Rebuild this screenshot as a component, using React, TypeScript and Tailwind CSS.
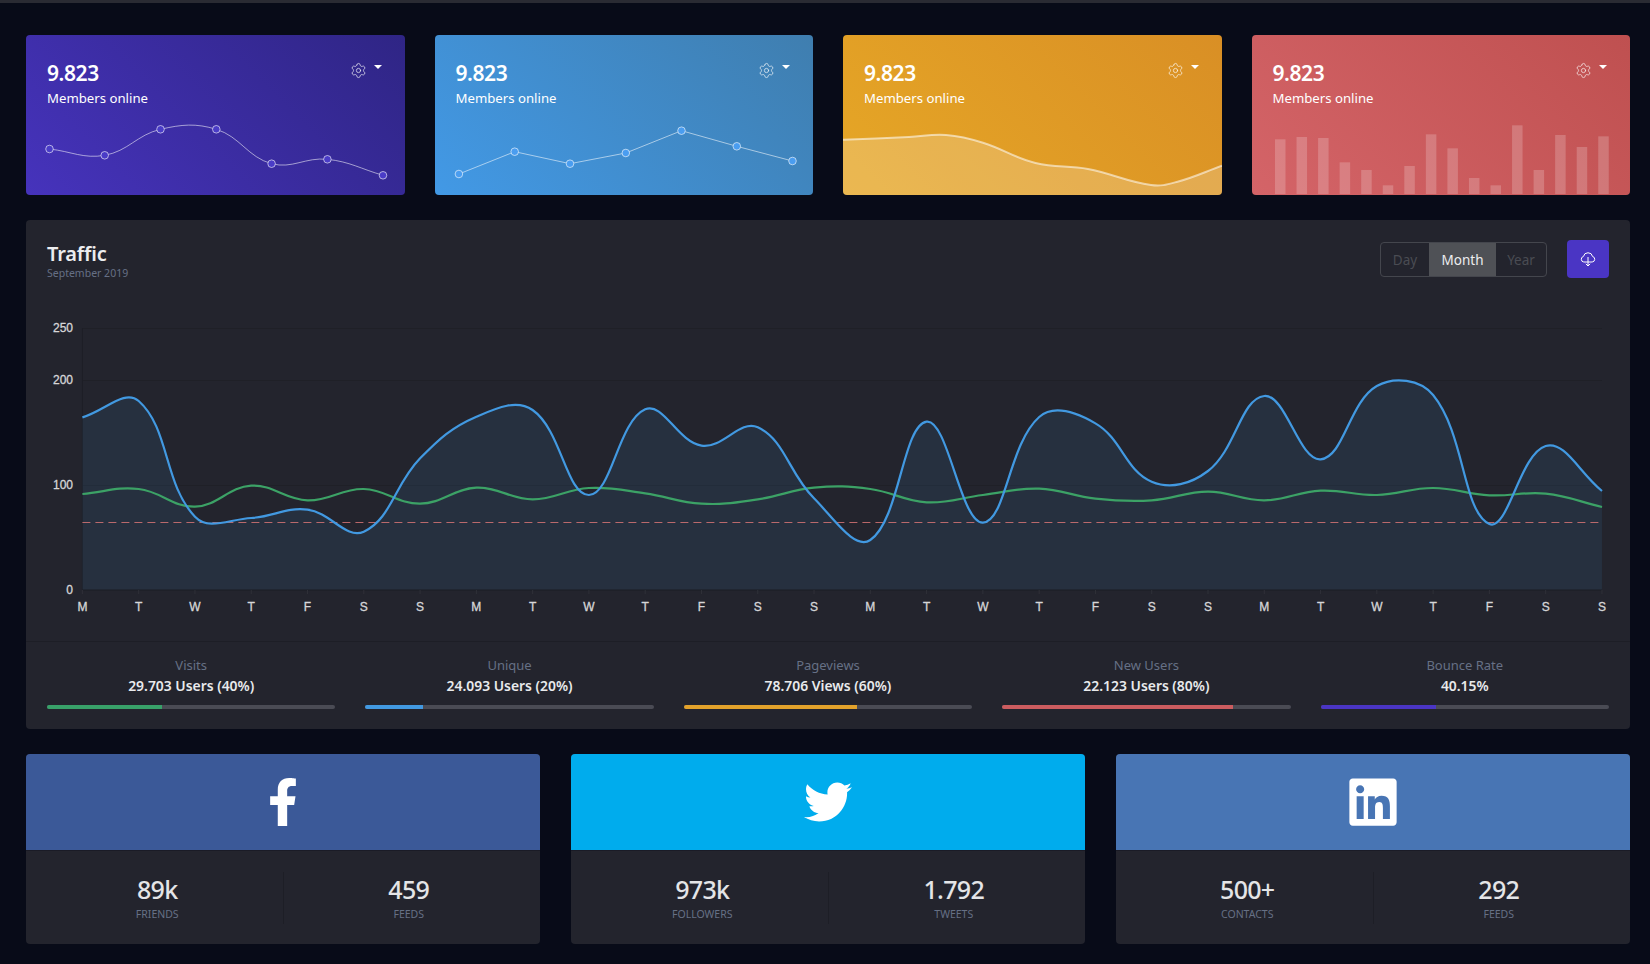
import { Settings } from 'lucide-react';
import { FaFacebookF, FaTwitter, FaLinkedin } from 'react-icons/fa';

type Pt = [number, number];

// same bezier smoothing as the chart lib: control points scaled by neighbour distance
function smoothPath(pts: Pt[], t = 0.4) {
  let d = `M${pts[0][0]} ${pts[0][1]}`;
  const cps = pts.map((cur, i) => {
    const prev = pts[i - 1] ?? cur;
    const next = pts[i + 1] ?? cur;
    const d01 = Math.hypot(cur[0] - prev[0], cur[1] - prev[1]);
    const d12 = Math.hypot(next[0] - cur[0], next[1] - cur[1]);
    const sum = d01 + d12 || 1;
    const fa = (t * d01) / sum;
    const fb = (t * d12) / sum;
    return {
      inp: [cur[0] - fa * (next[0] - prev[0]), cur[1] - fa * (next[1] - prev[1])],
      out: [cur[0] + fb * (next[0] - prev[0]), cur[1] + fb * (next[1] - prev[1])],
    };
  });
  for (let i = 1; i < pts.length; i++) {
    const a = cps[i - 1].out;
    const b = cps[i].inp;
    d += ` C${a[0].toFixed(1)} ${a[1].toFixed(1)} ${b[0].toFixed(1)} ${b[1].toFixed(1)} ${pts[i][0]} ${pts[i][1]}`;
  }
  return d;
}

const PLOT_LEFT = 82.4;
const PLOT_STEP = 56.28;
const PLOT_RIGHT = PLOT_LEFT + PLOT_STEP * 27;
const zoomY = (v: number) => 215 + v / 3;

const blueRaw = [607, 558, 905, 909, 884, 950, 730, 605, 585, 840, 583, 692, 637, 850, 975, 620, 923, 606, 625, 800, 768, 543, 733, 513, 540, 927, 693, 828];
const greenRaw = [837, 822, 875, 812, 856, 822, 866, 818, 853, 819, 835, 866, 853, 818, 822, 862, 840, 821, 851, 856, 830, 856, 827, 840, 819, 841, 836, 876];
const bluePts: Pt[] = blueRaw.map((v, i) => [+(PLOT_LEFT + i * PLOT_STEP).toFixed(1), zoomY(v)]);
const greenPts: Pt[] = greenRaw.map((v, i) => [+(PLOT_LEFT + i * PLOT_STEP).toFixed(1), zoomY(v)]);
const days = 'MTWTFSS'.repeat(4).split('');

const purplePts: Pt[] = [[49.5, 149], [104.7, 155.3], [160.5, 129.3], [216.3, 129.3], [271.6, 163.7], [327.4, 159.3], [383, 175.3]];
const skyPts: Pt[] = [[458.4, 174], [514.2, 151.7], [569.5, 163.7], [625.3, 153], [681, 130.7], [736.3, 146.3], [792, 161]];
const amberPts: Pt[] = [[843, 139.7], [909, 137], [946, 135], [983, 142.7], [1035.5, 163], [1088, 169], [1151, 185], [1177.6, 181.7], [1222, 165.7]];
const barTops = [418, 411, 414, 487, 510, 556, 498, 403, 445, 534, 556, 376, 510, 405, 441, 409];

function CardHead() {
  return (
    <div className="flex justify-between pl-[21px] pr-[23px] pt-[24px] h-[80px] text-white">
      <div>
        <div className="text-[21px] leading-[28px] font-semibold tracking-[-0.4px]">9.823</div>
        <div className="text-[13.2px] leading-[20px] mt-[1px]">Members online</div>
      </div>
      <div className="flex items-start gap-[7px] pt-[3px]">
        <Settings size={17} strokeWidth={1.1} className="opacity-85" />
        <span className="mt-[3px] w-0 h-0 border-x-[4px] border-x-transparent border-t-[4px] border-t-white" />
      </div>
    </div>
  );
}

function Spark({ x, children }: { x: number; children: React.ReactNode }) {
  return (
    <svg viewBox={`${x} 115 378.5 80`} className="block w-full h-[80px]">
      {children}
    </svg>
  );
}

function SparkDots({ pts, fill }: { pts: Pt[]; fill: string }) {
  return (
    <>
      {pts.map(([cx, cy], i) => (
        <circle key={i} cx={cx} cy={cy} r={3.8} fill={fill} stroke="rgba(255,255,255,0.6)" strokeWidth={1} />
      ))}
    </>
  );
}

const stats = [
  { label: 'Visits', value: '29.703 Users (40%)', pct: 40, bar: 'bg-[#38a169]' },
  { label: 'Unique', value: '24.093 Users (20%)', pct: 20, bar: 'bg-[#4299e1]' },
  { label: 'Pageviews', value: '78.706 Views (60%)', pct: 60, bar: 'bg-[#e2a22b]' },
  { label: 'New Users', value: '22.123 Users (80%)', pct: 80, bar: 'bg-[#cb5c5f]' },
  { label: 'Bounce Rate', value: '40.15%', pct: 40, bar: 'bg-[#4a35c4]' },
];

const socials = [
  { bg: 'bg-[#3b5998]', icon: <FaFacebookF size={48} />, a: ['89k', 'Friends'], b: ['459', 'Feeds'] },
  { bg: 'bg-[#00aced]', icon: <FaTwitter size={48} />, a: ['973k', 'Followers'], b: ['1.792', 'Tweets'] },
  { bg: 'bg-[#4875b4]', icon: <FaLinkedin size={54} />, a: ['500+', 'Contacts'], b: ['292', 'Feeds'] },
];

function SocialStat({ value, label }: { value: string; label: string }) {
  return (
    <div className="flex-1 text-center pt-[2px]">
      <div className="text-[25px] leading-[30px] font-medium tracking-[-0.7px] text-[#e4e5e7]">{value}</div>
      <div className="text-[10.5px] leading-[16px] mt-[2px] uppercase text-[#667085]">{label}</div>
    </div>
  );
}

export default function App() {
  const bluePath = smoothPath(bluePts);
  const axisText = { fontSize: 12, fill: '#d6d6d8', stroke: '#d6d6d8', strokeWidth: 0.3, fontFamily: 'Liberation Sans, sans-serif' };
  return (
    <div className="min-h-[964px] bg-[#080b18] font-['Noto_Sans',sans-serif] overflow-hidden">
      <div className="h-[3px] bg-[#2a2b33]" />
      <div className="pl-[26px] pr-[20px] pt-[32px]">
        {/* top cards */}
        <div className="grid grid-cols-4 gap-[30px]">
          <div className="h-[160px] rounded-[4px] overflow-hidden bg-linear-45 from-[#4633bc] to-[#2f2585]">
            <CardHead />
            <Spark x={26}>
              <path d={smoothPath(purplePts)} fill="none" stroke="rgba(255,255,255,0.55)" strokeWidth={1} />
              <SparkDots pts={purplePts} fill="#4a3cc7" />
            </Spark>
          </div>
          <div className="h-[160px] rounded-[4px] overflow-hidden bg-linear-45 from-[#4299e6] to-[#3f7eaf]">
            <CardHead />
            <Spark x={434.5}>
              <path d={`M${skyPts.map((p) => p.join(' ')).join(' L')}`} fill="none" stroke="rgba(255,255,255,0.55)" strokeWidth={1} />
              <SparkDots pts={skyPts} fill="#4a9df0" />
            </Spark>
          </div>
          <div className="h-[160px] rounded-[4px] overflow-hidden bg-linear-45 from-[#e6a726] to-[#d98f25]">
            <CardHead />
            <Spark x={843}>
              <path d={`${smoothPath(amberPts)} L1222 195 L843 195 Z`} fill="rgba(255,255,255,0.2)" />
              <path d={smoothPath(amberPts)} fill="none" stroke="rgba(255,255,255,0.55)" strokeWidth={2} />
            </Spark>
          </div>
          <div className="h-[160px] rounded-[4px] overflow-hidden bg-linear-45 from-[#d46468] to-[#bf5050]">
            <CardHead />
            <Spark x={1251.5}>
              {barTops.map((top, i) => (
                <rect key={i} x={1274.5 + i * 21.55} y={top / 3} width={10.5} height={194 - top / 3} fill="rgba(255,255,255,0.2)" />
              ))}
            </Spark>
          </div>
        </div>

        {/* traffic */}
        <div className="mt-[25px] h-[509px] rounded-[4px] bg-[#23242d] flex flex-col">
          <div className="h-[80px] flex justify-between pl-[21px] pr-[21px] pt-[20px]">
            <div>
              <div className="text-[20px] leading-[25px] mt-[1px] font-semibold tracking-[-0.2px] text-[#ecedef]">Traffic</div>
              <div className="text-[10.5px] leading-[14px] text-[#667085]">September 2019</div>
            </div>
            <div className="flex items-start gap-[20px]">
              <div className="flex h-[35px] w-[167px] mt-[2px] rounded-[4px] border border-[#44464d] overflow-hidden text-[13.5px] leading-[34px] text-center">
                <div className="w-[48px] text-[#4a4c53]">Day</div>
                <div className="w-[67px] bg-[#4f5156] text-[#ecedef]">Month</div>
                <div className="flex-1 text-[#4a4c53]">Year</div>
              </div>
              <div className="w-[42px] h-[38px] rounded-[4px] bg-[#4a35c4] flex items-center justify-center">
                <svg width="16" height="16" viewBox="0 0 16 16" fill="none" stroke="white" strokeWidth="1">
                  <path d="M3.8 11H12.2A2.8 2.8 0 0 0 12.6 5.5 4.7 4.7 0 0 0 3.4 5.5 2.8 2.8 0 0 0 3.8 11Z" />
                  <path d="M8 6V15" />
                  <path d="M5.8 12.8 8 15 10.2 12.8" />
                </svg>
              </div>
            </div>
          </div>
          <svg viewBox="26 300 1604 341" className="block w-full h-[341px]">
            {[328.5, 380.5, 485.5].map((y) => (
              <line key={y} x1={PLOT_LEFT} x2={PLOT_RIGHT} y1={y} y2={y} stroke="#1f2027" />
            ))}
            <line x1={PLOT_LEFT} x2={PLOT_LEFT} y1={328} y2={590} stroke="#1e1f27" />
            <path d={`${bluePath} L${PLOT_RIGHT} 590 L${PLOT_LEFT} 590 Z`} fill="rgba(66,153,225,0.1)" />
            <line x1={PLOT_LEFT} x2={PLOT_RIGHT} y1={590} y2={590} stroke="#1b1c24" />
            {days.map((d, i) => {
              const x = PLOT_LEFT + i * PLOT_STEP;
              return (
                <g key={i}>
                  <line x1={x} x2={x} y1={590} y2={594} stroke="#2f3038" />
                  <text x={x} y={611} textAnchor="middle" {...axisText}>
                    {d}
                  </text>
                </g>
              );
            })}
            {[[250, 328], [200, 379.5], [100, 485], [0, 590]].map(([v, y]) => (
              <text key={v} x={73} y={y + 4} textAnchor="end" {...axisText}>
                {v}
              </text>
            ))}
            <line x1={PLOT_LEFT} x2={PLOT_RIGHT} y1={522.5} y2={522.5} stroke="#e07878" strokeOpacity={0.8} strokeDasharray="8 5" />
            <path d={smoothPath(greenPts)} fill="none" stroke="#3ca266" strokeWidth={2.2} />
            <path d={bluePath} fill="none" stroke="#4299e1" strokeWidth={2.2} />
          </svg>
          <div className="flex-1 border-t border-[#1d1e26] px-[21px] pt-[13px] grid grid-cols-5 gap-[30px]">
            {stats.map((s) => (
              <div key={s.label} className="text-center">
                <div className="text-[13px] leading-[20px] text-[#667085]">{s.label}</div>
                <div className="text-[13.9px] leading-[20px] mt-[1px] font-semibold text-[#e9eaec]">{s.value}</div>
                <div className="mt-[9px] h-[4px] rounded-[2px] bg-[#4a4b54] overflow-hidden">
                  <div className={`h-full ${s.bar}`} style={{ width: `${s.pct}%` }} />
                </div>
              </div>
            ))}
          </div>
        </div>

        {/* social */}
        <div className="mt-[25px] grid grid-cols-3 gap-[31px]">
          {socials.map((s, i) => (
            <div key={i} className="h-[190px] rounded-[4px] overflow-hidden bg-[#23242d] flex flex-col">
              <div className={`h-[97px] flex items-center justify-center border-b border-[#1a1b26] text-white ${s.bg}`}>{s.icon}</div>
              <div className="flex-1 flex px-[6px] pt-[21px] pb-[20px]">
                <SocialStat value={s.a[0]} label={s.a[1]} />
                <div className="w-px bg-[#1d1e26]" />
                <SocialStat value={s.b[0]} label={s.b[1]} />
              </div>
            </div>
          ))}
        </div>
      </div>
    </div>
  );
}
